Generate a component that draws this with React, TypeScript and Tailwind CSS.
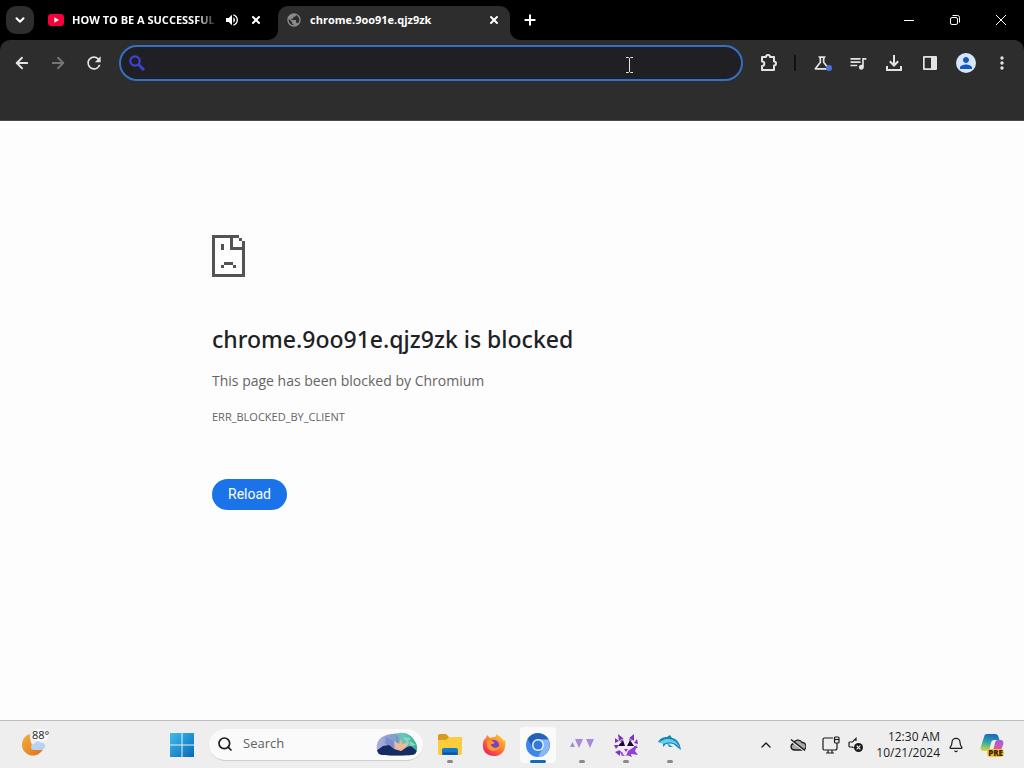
import React from 'react';
import { MdMoreVert, MdOutlineScience, MdPerson, MdPublic, MdQueueMusic, MdRefresh, MdVolumeUp } from 'react-icons/md';
import { ArrowLeft, ArrowRight, Bell, ChevronDown, ChevronUp, Plus, Search, X } from 'lucide-react';

const ToolbarButton = ({ label, children }: { label: string; children: React.ReactNode }) => (
  <button
    type="button"
    aria-label={label}
    className="relative flex h-9 w-9 shrink-0 items-center justify-center rounded-full text-[#e3e3e3]"
  >
    {children}
  </button>
);

const WindowButton = ({ label, children }: { label: string; children: React.ReactNode }) => (
  <button type="button" aria-label={label} className="flex h-10 w-[46px] items-center justify-center text-white">
    {children}
  </button>
);

const YouTubeIcon = () => (
  <svg className="h-4 w-4 shrink-0" viewBox="0 0 16 16">
    <rect x="0" y="2" width="16" height="12" rx="3" fill="#f5003c" />
    <path d="M6.3 5.2v5.6L11 8z" fill="#fff" />
  </svg>
);

const TabStrip = () => (
  <div className="flex h-10 bg-black text-white">
    <button
      type="button"
      aria-label="Search tabs"
      className="ml-1.5 mt-1.5 flex h-7 w-7 shrink-0 items-center justify-center rounded-[10px] bg-[#2e2e2e]"
    >
      <ChevronDown className="h-3.5 w-3.5" strokeWidth={3.5} />
    </button>

    <div className="ml-3.5 flex w-[230px] items-center">
      <YouTubeIcon />
      <span className="ml-2 w-[146px] whitespace-nowrap text-[11px] font-bold [mask-image:linear-gradient(to_right,black_85%,transparent)]">
        HOW TO BE A SUCCESSFUL
      </span>
      <MdVolumeUp className="ml-1.5 h-4 w-4 shrink-0" />
      <button type="button" aria-label="Close tab" className="ml-2 flex h-4 w-4 items-center justify-center">
        <X className="h-3 w-3" strokeWidth={4} />
      </button>
    </div>

    <div className="relative mt-1.5 flex w-[232px] items-center rounded-t-[10px] bg-[#2d2d2d] px-2 pb-1.5">
      <svg className="absolute -left-2.5 bottom-0 h-2.5 w-2.5" viewBox="0 0 10 10">
        <path d="M10 0v10H0A10 10 0 0 0 10 0z" fill="#2d2d2d" />
      </svg>
      <svg className="absolute -right-2.5 bottom-0 h-2.5 w-2.5" viewBox="0 0 10 10">
        <path d="M0 0v10h10A10 10 0 0 1 0 0z" fill="#2d2d2d" />
      </svg>
      <MdPublic className="h-4 w-4 shrink-0 text-[#8a8a8a]" />
      <span className="ml-2 flex-1 whitespace-nowrap text-[11px] font-bold">chrome.9oo91e.qjz9zk</span>
      <button type="button" aria-label="Close tab" className="flex h-4 w-4 items-center justify-center">
        <X className="h-3 w-3" strokeWidth={4} />
      </button>
    </div>

    <button type="button" aria-label="New tab" className="ml-1.5 flex h-10 w-7 items-center justify-center">
      <Plus className="h-4 w-4" strokeWidth={3} />
    </button>

    <div className="ml-auto flex">
      <WindowButton label="Minimize">
        <svg className="h-3 w-3" viewBox="0 0 12 12" stroke="currentColor">
          <path d="M1 6.5h10" />
        </svg>
      </WindowButton>
      <WindowButton label="Restore">
        <svg className="h-3 w-3" viewBox="0 0 12 12" fill="none" stroke="currentColor">
          <rect x="1.5" y="3.5" width="7" height="7" rx="1.5" />
          <path d="M3.5 1.5h5a2 2 0 0 1 2 2v5" />
        </svg>
      </WindowButton>
      <WindowButton label="Close">
        <svg className="h-3 w-3" viewBox="0 0 12 12" stroke="currentColor">
          <path d="M1 1l10 10M11 1L1 11" />
        </svg>
      </WindowButton>
    </div>
  </div>
);

const Toolbar = () => (
  <div className="bg-black">
    <div className="rounded-t-[10px] border-b border-[#4a4a4a] bg-[#2d2d2d] pb-[39px]">
      <div className="flex items-center px-1 pt-[5px]">
        <ToolbarButton label="Back">
          <ArrowLeft className="h-[18px] w-[18px]" strokeWidth={2.5} />
        </ToolbarButton>
        <ToolbarButton label="Forward">
          <ArrowRight className="h-[18px] w-[18px] text-[#757575]" strokeWidth={2.5} />
        </ToolbarButton>
        <ToolbarButton label="Reload">
          <MdRefresh className="h-5 w-5" />
        </ToolbarButton>

        <div className="relative mx-[7px] flex h-9 flex-1 items-center rounded-full border-2 border-[#3470c4] bg-[#1f1f24] pl-2">
          <svg className="h-4 w-4 shrink-0 text-[#3f42d8]" viewBox="0 0 16 16" fill="none" stroke="currentColor" strokeWidth="2.200">
            <circle cx="6" cy="6" r="4.700" />
            <path d="M9.500 9.500l5.500 5.500" strokeWidth="2.800" />
          </svg>
          <input
            aria-label="Address and search bar"
            type="text"
            className="min-w-0 flex-1 bg-transparent px-2 text-[14px] text-white outline-none"
          />
          <svg className="absolute right-[107px] top-[10px] h-4 w-[9px]" viewBox="0 0 9 16" fill="none" stroke="#e8e8e8">
            <path d="M1 .5h2.500l1 1 1-1H8M4.500 1.500v13M1 15.500h2.500l1-1 1 1H8" />
          </svg>
        </div>

        <ToolbarButton label="Extensions">
          <svg className="h-[18px] w-[18px]" viewBox="0 0 18 18" fill="none" stroke="currentColor" strokeWidth="2" strokeLinejoin="round">
            <path d="M3 3h4a2 2 0 0 1 4 0h4v4.500a2 2 0 0 1 0 4V16H3v-4a2.300 2.300 0 0 0 0-4.600z" />
          </svg>
        </ToolbarButton>
        <div className="mx-2 h-4 w-0.5 bg-[#111111]" />
        <ToolbarButton label="Experiments">
          <MdOutlineScience className="h-5 w-5" />
          <span className="absolute bottom-2.5 right-2 h-1.5 w-1.5 rounded-full bg-[#4a72d8]" />
        </ToolbarButton>
        <ToolbarButton label="Media controls">
          <MdQueueMusic className="h-5 w-5" />
        </ToolbarButton>
        <ToolbarButton label="Downloads">
          <svg className="h-4 w-4" viewBox="0 0 16 16" fill="none" stroke="currentColor" strokeWidth="2">
            <path d="M8 0v10M3.800 6.300L8 10.500l4.200-4.200M1 11v4h14v-4" />
          </svg>
        </ToolbarButton>
        <ToolbarButton label="Side panel">
          <svg className="h-4 w-4" viewBox="0 0 16 16">
            <path
              d="M2 1h12a1 1 0 0 1 1 1v12a1 1 0 0 1-1 1H2a1 1 0 0 1-1-1V2a1 1 0 0 1 1-1zm.700 1.700v10.600h6.300V2.700z"
              fill="currentColor"
              fillRule="evenodd"
            />
          </svg>
        </ToolbarButton>
        <ToolbarButton label="Profile">
          <span className="flex h-5 w-5 items-center justify-center rounded-full bg-[#d7e5fc]">
            <MdPerson className="h-[18px] w-[18px] text-[#1557c0]" />
          </span>
        </ToolbarButton>
        <ToolbarButton label="Menu">
          <MdMoreVert className="h-5 w-5" />
        </ToolbarButton>
      </div>
    </div>
  </div>
);

const SadPage = () => (
  <svg className="h-[42px] w-[33px]" viewBox="0 0 11 14" fill="#535353" shapeRendering="crispEdges">
    <path d="M0 0h9v1H7v3h3V2h1v12H0zM1 1v12h9V5H6V1zM9 1h1v1H9zM3 3h1v2H3zM4 9h3v1H4zM3 10h1v1H3zM7 10h1v1H7z" fillRule="evenodd" />
  </svg>
);

const ErrorPage = () => (
  <main className="flex-1 bg-[#fdfdfd]">
    <div className="mx-auto max-w-[600px] pt-[114px] text-[#646464]">
      <SadPage />
      <h1 className="mt-12 font-['Noto_Sans','Open_Sans',sans-serif] text-[23px] font-medium leading-7 text-[#202124]">
        chrome.9oo91e.qjz9zk is blocked
      </h1>
      <p className="mt-[18px] text-[14px] leading-5">This page has been blocked by Chromium</p>
      <p className="mt-4 text-[11px] leading-5">ERR_BLOCKED_BY_CLIENT</p>
      <button
        type="button"
        className="mt-[52px] h-[31px] rounded-full bg-[#1a73e8] px-4 font-['Roboto','Liberation_Sans',sans-serif] text-[14px] text-white"
      >
        Reload
      </button>
    </div>
  </main>
);

const WeatherIcon = () => (
  <svg className="h-6 w-6" viewBox="0 0 24 24">
    <defs>
      <linearGradient id="moon" x1="0" y1="0" x2="1" y2="1">
        <stop offset="0" stopColor="#f6b03a" />
        <stop offset="1" stopColor="#dd6f22" />
      </linearGradient>
    </defs>
    <path d="M8 1a11 11 0 1 0 13 15c-6 3-14-3-13-15z" fill="url(#moon)" />
    <path d="M12 17a3 3 0 0 1 0-6 4 4 0 0 1 7-1 3 3 0 0 1 2 6l-2 1z" fill="#b9d2f3" />
  </svg>
);

const StartIcon = () => (
  <svg className="h-6 w-6" viewBox="0 0 24 24">
    <defs>
      <linearGradient id="start" gradientUnits="userSpaceOnUse" x1="0" y1="0" x2="24" y2="24">
        <stop offset="0" stopColor="#3fbdec" />
        <stop offset="1" stopColor="#0569b8" />
      </linearGradient>
    </defs>
    <path d="M0 0h11.500v11.500H0zM12.500 0H24v11.500H12.500zM0 12.500h11.500V24H0zM12.500 12.500H24V24H12.500z" fill="url(#start)" />
  </svg>
);

const SearchArt = () => (
  <svg className="h-6 w-[42px]" viewBox="0 0 42 24">
    <defs>
      <linearGradient id="sky" x1="0" y1="0" x2="1" y2="0">
        <stop offset="0" stopColor="#b5aedd" />
        <stop offset="0.400" stopColor="#7f9fce" />
        <stop offset="0.650" stopColor="#67c9b5" />
        <stop offset="1" stopColor="#36a99b" />
      </linearGradient>
      <clipPath id="artShape">
        <path d="M3 22C-1 17 0 9 6 5c8-4 13-3 18-4 6-1 12 3 14 7 4 5 4 10 1 14-2 2-34 2-36 0z" />
      </clipPath>
    </defs>
    <g clipPath="url(#artShape)">
      <rect width="42" height="24" fill="url(#sky)" />
      <path d="M10 5l9 5 3 8-7-2-6-5zM19 1l4 7-2 5z" fill="#7e8dcb" />
      <path d="M27 5l8 1-4 5zM34 9l6 4-6 1z" fill="#7bdcc8" />
      <path d="M18 9l5 3 2-5 1 5 8-2-7 9-8 1z" fill="#eeb99b" />
      <path d="M0 19l7-5 6-1 5 4 7 2 6-4 4-1 7 6v4H0z" fill="#152b63" />
    </g>
  </svg>
);

const ExplorerIcon = () => (
  <svg className="h-6 w-6" viewBox="0 0 24 24">
    <path d="M0 3a2 2 0 0 1 2-2h6l3 3h11a2 2 0 0 1 2 2v5H0z" fill="#d99a1e" />
    <path d="M0 7h8l3-3h11a2 2 0 0 1 2 2v14a2 2 0 0 1-2 2H2a2 2 0 0 1-2-2z" fill="#fbcd3d" />
    <path d="M4 22v-5a2 2 0 0 1 2-2h12a2 2 0 0 1 2 2v5z" fill="#1478cf" />
    <path d="M5 20.500h14" stroke="#0b519c" strokeWidth="2" />
  </svg>
);

const FirefoxIcon = () => (
  <svg className="h-6 w-6" viewBox="0 0 24 24">
    <defs>
      <linearGradient id="fox" x1="1" y1="0" x2="0.200" y2="1">
        <stop offset="0" stopColor="#ffdf3f" />
        <stop offset="0.450" stopColor="#ff8a2a" />
        <stop offset="1" stopColor="#ed1c63" />
      </linearGradient>
    </defs>
    <path d="M4 5l1-3 3 3c2-1 3-1 5-1l2-3c1 2 5 3 7 7l1-1c2 9-3 16-11 16C5 23 0 18 1 11c0-3 1-5 3-6z" fill="url(#fox)" />
    <circle cx="12" cy="12" r="5" fill="#7442c8" />
    <path d="M5 8c3-2 5 0 7 1 1 1 0 2-2 2s-1 2 1 3c2 2 5 0 7-1-1 6-10 7-13 1z" fill="#ff9630" />
  </svg>
);

const ChromiumIcon = () => (
  <svg className="h-6 w-6" viewBox="0 0 24 24">
    <circle cx="12" cy="12" r="12" fill="#4285e8" />
    <path d="M1.600 6A12 12 0 0 1 22.400 6.500H12A5.500 5.500 0 0 0 7 15z" fill="#2263b8" />
    <path d="M22.400 6.500A12 12 0 0 1 12 24l5-9.500A5.500 5.500 0 0 0 12 6.500z" fill="#8ab8f5" />
    <circle cx="12" cy="12" r="6" fill="#e9f2fe" />
    <circle cx="12" cy="12" r="4.500" fill="#3679dc" />
  </svg>
);

const TrianglesIcon = () => (
  <svg className="h-6 w-6" viewBox="0 0 24 24" fill="#a68bdb">
    <path d="M5 6h8l-4 9zM16 6h8l-4 9zM0 14l2.500-5L5 14z" />
  </svg>
);

const CatIcon = () => (
  <svg className="h-6 w-6" viewBox="0 0 24 24">
    <path d="M4 1l6 5-5 2zM20 1l-6 5 6 2zM1 5l4 3-4 2zM23 6l-3 4 4 1zM0 12l5 0-3 4zM20 13l4 1-4 3zM1 19l5-2 0 6zM9 20h7l2 4-5-2-5 1z" fill="#7b35bd" />
    <path d="M6 7l5-2h4l5 3v7l-3 6-5 2-5-3-3-6z" fill="#f1e8fa" />
    <path d="M4 13l5-6 2 6zM13 13l3-6 4 6z" fill="#170b24" />
    <path d="M10 16h4l-2 3zM6 8l3-2-1 4zM18 7l-3-1 1 3z" fill="#8e35bd" />
    <path d="M14 18l9-6-2 6 3 4-6-1-6 2zM5 17l4 3-1 3z" fill="#8f3fdc" />
  </svg>
);

const DolphinIcon = () => (
  <svg className="h-6 w-6" viewBox="0 0 24 24">
    <path d="M0 9c2-4 6-5 9-5l3-2 2 3c6 1 8 6 9 12l-4-3C16 10 12 10 8 11l-3 3 0-4z" fill="#1684b5" />
    <path d="M0 9c4 0 5-3 9-3 6 0 10 2 13 9-4-5-9-7-14-5-2 1-5 1-8-1z" fill="#69cdee" />
    <path d="M9 10l6 4-4 0z" fill="#1c9bcb" />
  </svg>
);

const apps = [
  { name: 'File Explorer', icon: <ExplorerIcon />, running: true, active: false },
  { name: 'Firefox', icon: <FirefoxIcon />, running: false, active: false },
  { name: 'Chromium', icon: <ChromiumIcon />, running: true, active: true },
  { name: 'Triangles', icon: <TrianglesIcon />, running: true, active: false },
  { name: 'Cat', icon: <CatIcon />, running: true, active: false },
  { name: 'Dolphin', icon: <DolphinIcon />, running: true, active: false },
];

const Taskbar = () => (
  <footer className="flex h-12 items-center border-t border-[#bdbdbd] bg-[#eeeeee] text-[#1b1b1b]">
    <div className="w-40 pl-[22px]">
      <button type="button" aria-label="Weather" className="relative flex h-10 w-8 items-center">
        <WeatherIcon />
        <span className="absolute left-2.5 top-1 rounded-full bg-[#fafafa] text-[11px] leading-3">88°</span>
      </button>
    </div>

    <button type="button" aria-label="Start" className="flex h-10 w-11 items-center justify-center">
      <StartIcon />
    </button>
    <label className="mx-[5px] flex h-8 w-[214px] items-center rounded-full border-b border-[#d0d0d0] bg-[#fafafa] pl-2">
      <Search className="h-4 w-4 shrink-0" strokeWidth={2.5} />
      <input
        type="text"
        aria-label="Search"
        placeholder="Search"
        className="ml-2.5 min-w-0 flex-1 bg-transparent text-[13px] placeholder-[#606060] outline-none"
      />
      <span className="mr-[5px] shrink-0">
        <SearchArt />
      </span>
    </label>

    {apps.map((app) => (
      <button key={app.name} type="button" aria-label={app.name} className="relative flex h-12 w-11 items-center justify-center">
        <span className={app.active ? 'flex h-9 w-9 items-center justify-center rounded bg-[#fafafa]' : ''}>{app.icon}</span>
        {app.running && (
          <span
            className={
              app.active
                ? 'absolute bottom-1.5 h-[3px] w-4 rounded-full bg-[#0f6cbd]'
                : 'absolute bottom-1.5 h-[3px] w-1.5 rounded-full bg-[#8a8a8a]'
            }
          />
        )}
      </button>
    ))}

    <div className="ml-auto flex items-center">
      <button type="button" aria-label="Show hidden icons" className="flex h-10 w-8 items-center justify-center">
        <ChevronUp className="h-4 w-4" />
      </button>
      <button type="button" aria-label="OneDrive" className="flex h-10 w-8 items-center justify-center">
        <svg className="h-4 w-4" viewBox="0 0 16 16" fill="none" stroke="currentColor" strokeWidth="1.300">
          <path d="M4 13a3.300 3.300 0 0 1-.300-6.500 4.500 4.500 0 0 1 8.300-1 3.700 3.700 0 0 1 .500 7.500z" fill="#a8a8a8" />
          <path d="M1 4l13 10" stroke="#eeeeee" />
          <path d="M1 2.500l14 11" strokeWidth="1.500" />
        </svg>
      </button>
      <button type="button" aria-label="Network and volume" className="flex h-10 items-center gap-2 px-2">
        <svg className="h-[18px] w-[18px]" viewBox="0 0 18 18" fill="none" stroke="currentColor" strokeWidth="1.200">
          <path d="M11 2H2.500A1.500 1.500 0 0 0 1 3.500v9A1.500 1.500 0 0 0 2.500 14H13a2 2 0 0 0 2-2V7M4 17h8M6 14v3M10 14v3" />
          <rect x="12.500" y="1" width="4.500" height="6" rx="1" />
          <path d="M12.500 3.500h4.500" />
        </svg>
        <svg className="h-4 w-4" viewBox="0 0 16 16" fill="none" stroke="currentColor" strokeWidth="1.200">
          <path d="M8 4V1.500L4.500 5H2a1 1 0 0 0-1 1v3a1 1 0 0 0 1 1h2.500l1 1" />
          <circle cx="10.500" cy="10.500" r="4.500" fill="#1b1b1b" stroke="none" />
          <path d="M8.700 8.700l3.600 3.600M12.300 8.700l-3.600 3.600" stroke="#eee" />
        </svg>
      </button>
      <button type="button" className="ml-1 text-right text-[12px] leading-4">
        <span className="block">12:30 AM</span>
        <span className="block">10/21/2024</span>
      </button>
      <button type="button" aria-label="Notifications" className="flex h-10 w-8 items-center justify-center">
        <Bell className="h-4 w-4" strokeWidth={1.8} />
      </button>
      <button type="button" aria-label="Copilot" className="relative mr-5 ml-2 flex h-10 w-6 items-center justify-center">
        <svg className="h-6 w-6" viewBox="0 0 24 24">
          <defs>
            <linearGradient id="copLeft" x1="0.500" y1="0" x2="0.300" y2="1">
              <stop offset="0" stopColor="#1667c4" />
              <stop offset="0.500" stopColor="#2fa9a5" />
              <stop offset="1" stopColor="#d8d24a" />
            </linearGradient>
            <linearGradient id="copRight" x1="0.500" y1="0" x2="0.400" y2="1">
              <stop offset="0" stopColor="#a65ce0" />
              <stop offset="0.600" stopColor="#e5569a" />
              <stop offset="1" stopColor="#f58a4a" />
            </linearGradient>
          </defs>
          <path d="M7 1h8c2 0 3 1 3.500 3l1 3h-5c-2 0-3 1-3.500 3L9 18H4c-3 0-4-2-3-5L4 4c.500-2 1-3 3-3z" fill="url(#copLeft)" />
          <path d="M17 23H9c2 0 3-1 3.500-3L15 10c.500-2 1-3 3-3h2c3 0 4 2 3 5l-3 8c-.500 2-1 3-3 3z" fill="url(#copRight)" />
        </svg>
        <span className="absolute bottom-2 right-0 rounded-sm bg-[#fbc02d] px-px text-[8px] font-extrabold leading-2 text-[#3a2600]">PRE</span>
      </button>
    </div>
  </footer>
);

const App: React.FC = () => {
  return (
    <div className="flex min-h-screen flex-col font-['Open_Sans','Noto_Sans',sans-serif]">
      <TabStrip />
      <Toolbar />
      <ErrorPage />
      <Taskbar />
    </div>
  );
};

export default App;
